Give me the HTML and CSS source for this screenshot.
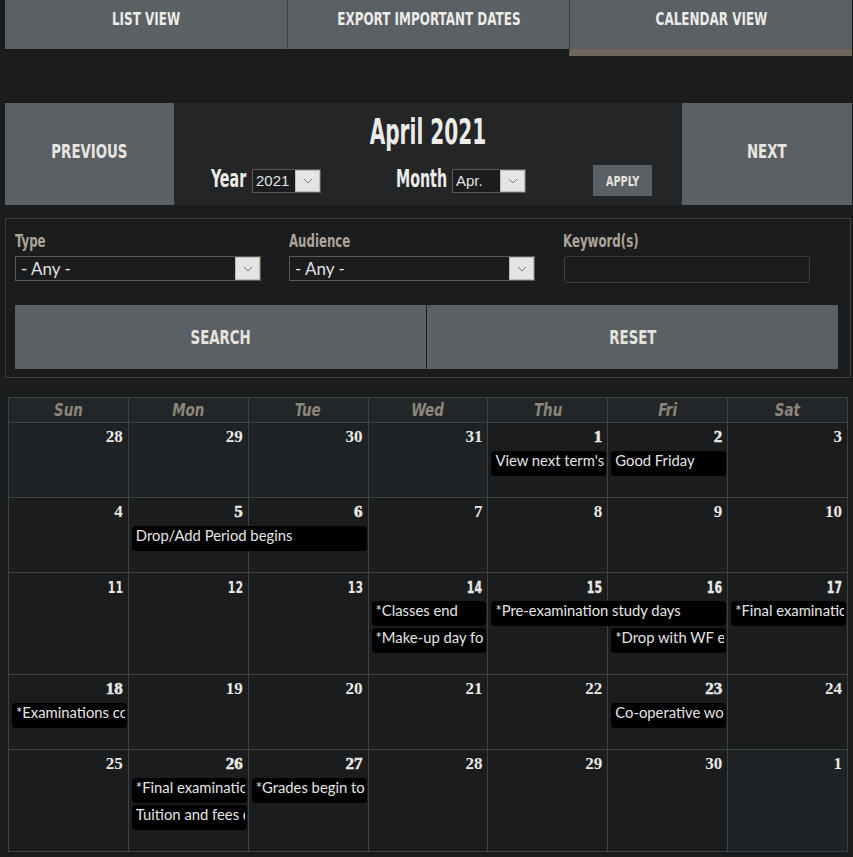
FILE: index.html
```html
<!DOCTYPE html>
<html lang="en">
<head>
<meta charset="utf-8">
<title>Important Dates - Calendar</title>
<link rel="stylesheet" href="styles.css">
</head>
<body>
<div class="page">
  <nav class="tabs">
    <a class="tab" href="#"><span class="nar">LIST VIEW</span></a>
    <a class="tab" href="#"><span class="nar">EXPORT IMPORTANT DATES</span></a>
    <a class="tab active" href="#"><span class="nar">CALENDAR VIEW</span></a>
  </nav>

  <section class="monthnav">
    <a class="navbtn prev" href="#"><span class="nar">PREVIOUS</span></a>
    <div class="monthcenter">
      <h1 class="title"><span class="nar">April 2021</span></h1>
      <div class="jump">
        <div class="jgroup">
          <label class="jlabel year"><span class="nar left">Year</span></label>
          <div class="select sel-year">
            <span class="sel-text">2021</span>
            <span class="sel-arrow"><svg width="10" height="6" viewBox="0 0 10 6"><path d="M1 1l4 4 4-4" fill="none" stroke="#7a7a7a" stroke-width="1"/></svg></span>
          </div>
        </div>
        <div class="jgroup month">
          <label class="jlabel mon"><span class="nar left">Month</span></label>
          <div class="select sel-month">
            <span class="sel-text">Apr.</span>
            <span class="sel-arrow"><svg width="10" height="6" viewBox="0 0 10 6"><path d="M1 1l4 4 4-4" fill="none" stroke="#7a7a7a" stroke-width="1"/></svg></span>
          </div>
        </div>
        <button class="apply" type="button"><span class="nar">APPLY</span></button>
      </div>
    </div>
    <a class="navbtn next" href="#"><span class="nar">NEXT</span></a>
  </section>

  <form class="filters">
    <div class="fields">
      <div class="field">
        <label class="flabel"><span class="nar left">Type</span></label>
        <div class="select sel-big">
          <span class="sel-text any">- Any -</span>
          <span class="sel-arrow"><svg width="10" height="6" viewBox="0 0 10 6"><path d="M1 1l4 4 4-4" fill="none" stroke="#7a7a7a" stroke-width="1"/></svg></span>
        </div>
      </div>
      <div class="field">
        <label class="flabel"><span class="nar left">Audience</span></label>
        <div class="select sel-big">
          <span class="sel-text any">- Any -</span>
          <span class="sel-arrow"><svg width="10" height="6" viewBox="0 0 10 6"><path d="M1 1l4 4 4-4" fill="none" stroke="#7a7a7a" stroke-width="1"/></svg></span>
        </div>
      </div>
      <div class="field">
        <label class="flabel"><span class="nar left">Keyword(s)</span></label>
        <input class="kw" type="text">
      </div>
    </div>
    <div class="actions">
      <button class="bigbtn" type="button"><span class="nar">SEARCH</span></button>
      <button class="bigbtn" type="button"><span class="nar">RESET</span></button>
    </div>
  </form>

  <div class="calendar">
    <div class="dow">
      <div><span class="nar">Sun</span></div><div><span class="nar">Mon</span></div><div><span class="nar">Tue</span></div><div><span class="nar">Wed</span></div><div><span class="nar">Thu</span></div><div><span class="nar">Fri</span></div><div><span class="nar">Sat</span></div>
    </div>

    <div class="week n1">
      <div class="cell c1 out"></div><div class="cell c2 out"></div><div class="cell c3 out"></div><div class="cell c4 out"></div><div class="cell c5"></div><div class="cell c6"></div><div class="cell c7"></div>
      <div class="num c1">28</div><div class="num c2">29</div><div class="num c3">30</div><div class="num c4">31</div><div class="num c5 has">1</div><div class="num c6 has">2</div><div class="num c7">3</div>
      <div class="ev c5 r1"><span class="t">View next term's timetable</span></div>
      <div class="ev c6 r1"><span class="t">Good Friday</span></div>
    </div>

    <div class="week n1">
      <div class="cell c1"></div><div class="cell c2"></div><div class="cell c3"></div><div class="cell c4"></div><div class="cell c5"></div><div class="cell c6"></div><div class="cell c7"></div>
      <div class="num c1">4</div><div class="num c2 has">5</div><div class="num c3 has">6</div><div class="num c4">7</div><div class="num c5">8</div><div class="num c6">9</div><div class="num c7">10</div>
      <div class="ev c2 s2 r1"><span class="t">Drop/Add Period begins</span></div>
    </div>

    <div class="week n2 sans">
      <div class="cell c1"></div><div class="cell c2"></div><div class="cell c3"></div><div class="cell c4"></div><div class="cell c5"></div><div class="cell c6"></div><div class="cell c7"></div>
      <div class="num c1"><span class="nar right">11</span></div><div class="num c2"><span class="nar right">12</span></div><div class="num c3"><span class="nar right">13</span></div><div class="num c4 has"><span class="nar right">14</span></div><div class="num c5 has"><span class="nar right">15</span></div><div class="num c6 has"><span class="nar right">16</span></div><div class="num c7 has"><span class="nar right">17</span></div>
      <div class="ev c4 r1"><span class="t">*Classes end</span></div>
      <div class="ev c4 r2"><span class="t">*Make-up day for Good Friday</span></div>
      <div class="ev c5 s2 r1"><span class="t">*Pre-examination study days</span></div>
      <div class="ev c6 r2"><span class="t">*Drop with WF ends</span></div>
      <div class="ev c7 r1"><span class="t">*Final examinations begin</span></div>
    </div>

    <div class="week n1">
      <div class="cell c1"></div><div class="cell c2"></div><div class="cell c3"></div><div class="cell c4"></div><div class="cell c5"></div><div class="cell c6"></div><div class="cell c7"></div>
      <div class="num c1 has">18</div><div class="num c2">19</div><div class="num c3">20</div><div class="num c4">21</div><div class="num c5">22</div><div class="num c6 has">23</div><div class="num c7">24</div>
      <div class="ev c1 r1"><span class="t">*Examinations continue</span></div>
      <div class="ev c6 r1"><span class="t">Co-operative work term ends</span></div>
    </div>

    <div class="week n2">
      <div class="cell c1"></div><div class="cell c2"></div><div class="cell c3"></div><div class="cell c4"></div><div class="cell c5"></div><div class="cell c6"></div><div class="cell c7 out"></div>
      <div class="num c1">25</div><div class="num c2 has">26</div><div class="num c3 has">27</div><div class="num c4">28</div><div class="num c5">29</div><div class="num c6">30</div><div class="num c7">1</div>
      <div class="ev c2 r1"><span class="t">*Final examinations end</span></div>
      <div class="ev c2 r2"><span class="t">Tuition and fees due</span></div>
      <div class="ev c3 r1"><span class="t">*Grades begin to appear</span></div>
    </div>
  </div>
</div>
</body>
</html>
```

FILE: styles.css
```css
* { box-sizing: border-box; }

body {
  margin: 0;
  background: #1b1c1e;
  color: #e9e6e2;
  font-family: "Lato", "DejaVu Sans", sans-serif;
}

.page {
  width: 847px;
  margin-left: 5px;
}

/* condensed display text: DejaVu Sans Condensed narrowed further */
.nar {
  display: inline-block;
  white-space: nowrap;
  transform: scaleX(0.74);
  transform-origin: center;
}
.nar.left { transform-origin: left center; }
.nar.right { transform-origin: right center; }

/* ---------- tabs ---------- */
.tabs {
  display: flex;
  align-items: flex-start;
}
.tab {
  flex: 1;
  height: 49px;
  padding-top: 9px;
  background: #5a6064;
  color: #ecebe8;
  text-decoration: none;
  text-align: center;
  font-family: "DejaVu Sans Condensed", "DejaVu Sans", sans-serif;
  font-weight: bold;
  font-size: 18px;
  line-height: 20px;
  border-left: 1px solid #3f4447;
}
.tab:first-child { border-left: none; }
.tab.active {
  height: 56px;
  border-bottom: 7px solid #6f675b;
}

/* ---------- month navigation ---------- */
.monthnav {
  display: flex;
  height: 102px;
  margin-top: 47px;
  background: #232527;
}
.navbtn {
  display: flex;
  align-items: center;
  justify-content: center;
  padding-bottom: 6px;
  background: #5a6064;
  color: #e9e6e2;
  text-decoration: none;
  font-family: "DejaVu Sans Condensed", "DejaVu Sans", sans-serif;
  font-weight: bold;
  font-size: 20px;
}
.navbtn.prev { width: 169px; }
.navbtn.next { width: 170px; }

.monthcenter {
  flex: 1;
  display: flex;
  flex-direction: column;
}
.title {
  margin: 0;
  padding-top: 9px;
  text-align: center;
  font-family: "DejaVu Sans Condensed", "DejaVu Sans", sans-serif;
  font-weight: bold;
  font-size: 36px;
  line-height: 40px;
  color: #ecebe8;
}
.title .nar { transform: scaleX(0.62); }
.jump {
  display: flex;
  align-items: center;
  height: 31px;
  margin-top: 13px;
  padding-left: 37px;
}
.jgroup {
  display: flex;
  align-items: center;
}
.jgroup.month { margin-left: 75px; }
.jlabel {
  padding-bottom: 3px;
  white-space: nowrap;
  font-family: "DejaVu Sans Condensed", "DejaVu Sans", sans-serif;
  font-weight: bold;
  font-size: 24px;
  line-height: 24px;
  color: #ecebe8;
}
.jlabel .nar { transform: scaleX(0.66); }
.jlabel.year { width: 41px; }
.jlabel.mon { width: 56px; }
.apply {
  width: 59px;
  height: 31px;
  margin-left: 67px;
  padding: 0;
  border: none;
  background: #5a6064;
  color: #e6e3df;
  font-family: "DejaVu Sans Condensed", "DejaVu Sans", sans-serif;
  font-weight: bold;
  font-size: 14px;
}
.apply .nar { transform: scaleX(0.77); }

/* ---------- select look ---------- */
.select {
  display: flex;
  align-items: stretch;
  border: 1px solid #5f584e;
  background: #1b1c1e;
}
.sel-text {
  flex: 1;
  display: flex;
  align-items: center;
  padding-left: 3px;
  color: #e2e2e2;
  font-family: "Liberation Sans", Arial, sans-serif;
  font-size: 15px;
  white-space: nowrap;
}
.sel-arrow {
  width: 25px;
  display: flex;
  align-items: center;
  justify-content: center;
  background: #e4e4e4;
  border: 1px solid #bdbdbd;
}
.sel-year { width: 69px; height: 24px; }
.sel-month { width: 74px; height: 24px; }
.sel-big { width: 246px; height: 25px; }
.sel-text.any {
  padding-left: 5px;
  font-family: "Lato", sans-serif;
  font-size: 17px;
}

/* ---------- filters ---------- */
.filters {
  width: 846px;
  margin-top: 13px;
  padding: 12px 12px 8px 9px;
  border: 1px solid #3a3d3f;
}
.fields {
  display: grid;
  grid-template-columns: repeat(3, 246px);
  column-gap: 28px;
}
.flabel {
  display: block;
  margin-bottom: 5px;
  white-space: nowrap;
  font-family: "DejaVu Sans Condensed", "DejaVu Sans", sans-serif;
  font-weight: bold;
  font-size: 17px;
  line-height: 20px;
  color: #aca397;
}
.flabel .nar { transform: scaleX(0.77); }
.kw {
  display: block;
  width: 246px;
  height: 27px;
  margin-left: 1px;
  border: 1px solid #3c3e40;
  border-radius: 3px;
  background: transparent;
}
.actions {
  display: grid;
  grid-template-columns: 1fr 1fr;
  column-gap: 1px;
  margin-top: 22px;
}
.bigbtn {
  height: 64px;
  border: none;
  background: #5a6064;
  color: #e6e3df;
  font-family: "DejaVu Sans Condensed", "DejaVu Sans", sans-serif;
  font-weight: bold;
  font-size: 20px;
}

/* ---------- calendar ---------- */
.calendar {
  width: 840px;
  margin: 19px 0 0 3px;
  border-top: 1px solid #3d4244;
  border-left: 1px solid #3d4244;
}
.dow {
  display: grid;
  grid-template-columns: repeat(7, minmax(0, 1fr));
  background: #232628;
}
.dow div {
  height: 25px;
  border-right: 1px solid #3d4244;
  border-bottom: 1px solid #3d4244;
  text-align: center;
  font-family: "DejaVu Sans Condensed", "DejaVu Sans", sans-serif;
  font-weight: bold;
  font-style: italic;
  font-size: 17px;
  line-height: 24px;
  color: #8c857a;
}
.dow .nar { transform: scaleX(0.88); }

.week {
  display: grid;
  grid-template-columns: repeat(7, minmax(0, 1fr));
}
.week.n1 { grid-template-rows: 28px 27px 20px; }
.week.n2 { grid-template-rows: 28px 27px 27px 20px; }

.cell {
  grid-row: 1 / -1;
  border-right: 1px solid #3d4244;
  border-bottom: 1px solid #3d4244;
  background: #1b1c1e;
}
.cell.out { background: #1f2224; }

.c1 { grid-column: 1; }
.c2 { grid-column: 2; }
.c3 { grid-column: 3; }
.c4 { grid-column: 4; }
.c5 { grid-column: 5; }
.c6 { grid-column: 6; }
.c7 { grid-column: 7; }
.c2.s2 { grid-column: 2 / span 2; }
.c5.s2 { grid-column: 5 / span 2; }

.num {
  grid-row: 1;
  padding: 5px 6px 0 0;
  text-align: right;
  font-family: "Liberation Serif", "Times New Roman", serif;
  font-weight: bold;
  font-size: 17px;
  line-height: 17px;
  color: #ebe8e4;
}
.num.has { -webkit-text-stroke: 0.5px #ebe8e4; }
.week.sans .num {
  padding-top: 6px;
  font-family: "DejaVu Sans Condensed", "DejaVu Sans", sans-serif;
  font-size: 16px;
}
.week.sans .num .nar { transform: scaleX(0.76); }
.week.sans .num.has { -webkit-text-stroke: 0.3px #ebe8e4; }

.ev {
  align-self: start;
  min-width: 0;
  height: 25px;
  margin: 0 2px 0 3px;
  padding: 1px 2px 7px 4px;
  background: #000;
  border-radius: 4px;
  color: #e6e6e6;
  font-family: "Lato", sans-serif;
  font-size: 14.8px;
  line-height: 17px;
}
.ev .t {
  display: block;
  white-space: nowrap;
  overflow: hidden;
}
.r1 { grid-row: 2; }
.r2 { grid-row: 3; }
```
